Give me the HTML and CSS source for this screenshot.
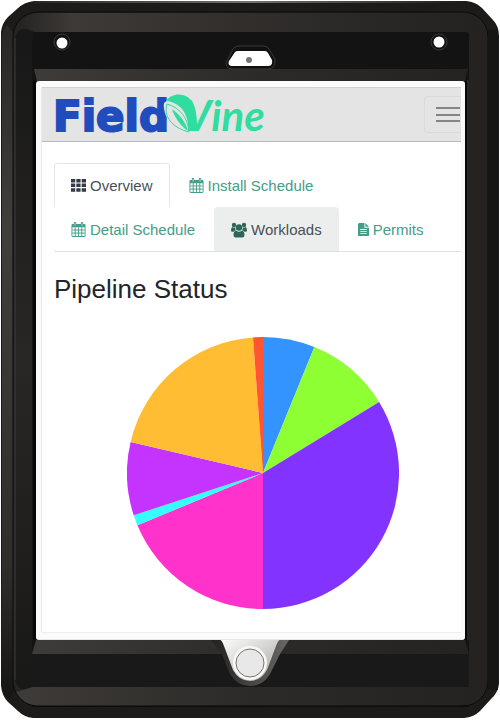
FILE: index.html
```html
<!DOCTYPE html>
<html lang="en">
<head>
<meta charset="utf-8">
<meta name="viewport" content="width=device-width, initial-scale=1">
<title>FieldVine</title>
<link rel="stylesheet" href="styles.css">
</head>
<body>
<div class="device">
  <svg class="case" viewBox="0 0 500 720" preserveAspectRatio="none" aria-hidden="true">
    <defs>
      <linearGradient id="bevelTop" x1="0" x2="1"><stop offset="0" stop-color="#242220"/><stop offset=".12" stop-color="#3d3a38"/><stop offset=".45" stop-color="#322f2d"/><stop offset="1" stop-color="#232221"/></linearGradient>
      <linearGradient id="bevelLow" x1="0" x2="1"><stop offset="0" stop-color="#3e3b38"/><stop offset=".5" stop-color="#2d2b29"/><stop offset="1" stop-color="#242321"/></linearGradient>
      <linearGradient id="sideLeft" x1="0" x2="0" y1="0" y2="1"><stop offset="0" stop-color="#292725"/><stop offset=".3" stop-color="#403f3c"/><stop offset=".8" stop-color="#302e2b"/><stop offset="1" stop-color="#151514"/></linearGradient>
      <linearGradient id="channel" x1="0" x2="0" y1="0" y2="1"><stop offset="0" stop-color="#171717"/><stop offset=".5" stop-color="#292725"/><stop offset="1" stop-color="#181817"/></linearGradient>
      <linearGradient id="edge" gradientUnits="userSpaceOnUse" x1="34" x2="466" y1="0" y2="0"><stop offset="0" stop-color="#282624"/><stop offset=".5" stop-color="#75716c"/><stop offset="1" stop-color="#1a1a1a"/></linearGradient>
      <linearGradient id="home" x1="0" x2="1" y1="0" y2="1"><stop offset="0" stop-color="#fff"/><stop offset="1" stop-color="#a5a4a2"/></linearGradient>
      <linearGradient id="bowl" x1="0" x2="1"><stop offset="0" stop-color="#22201f"/><stop offset="1" stop-color="#6a6764"/></linearGradient>
    </defs>
    <path d="M34 1H466Q476 2 482 8L493 20Q499 26 499 36V684Q498 693 491 699L480 711Q474 717 464 718H33Q24 717 18 711L8 702Q2 696 1 686V32Q2 23 8 17L17 9Q24 2 34 1Z" fill="#1c1b1a"/>
    <path d="M7 25Q2 29 2 40V686Q3 695 10 699L14 690V34Z" fill="url(#sideLeft)"/>
    <path d="M34 1H466V3H34Z" fill="url(#edge)"/>
    <rect x="13" y="12" width="475" height="694" rx="25" fill="#262422" stroke="#0b0b0b"/>
    <path d="M15 38Q18 18 38 13H460Q480 14 486 34L469 33H34Z" fill="url(#bevelTop)"/>
    <path d="M15 38Q18 24 34 32V687Q18 694 15 680Z" fill="url(#channel)"/>
    <path d="M15 38V680" stroke="#3d3b38"/>
    <path d="M469 34H487V680Q486 702 464 705L469 687Z" fill="#252321"/>
    <path d="M493 30V690" stroke="#151514" stroke-width="10"/>
    <path d="M34 32H466Q469 32 469 35V684Q469 687 466 687H32V48Z" fill="#131313"/>
    <path d="M34 69H468L465 81H37Z" fill="url(#bevelLow)"/>
    <path d="M36 640H465L469 654H32Z" fill="url(#bevelLow)"/>
    <path d="M32 654H469V687H32Z" fill="#191919"/>
    <path d="M33 687H468L462 706H38Q22 704 16 692Z" fill="url(#bevelLow)"/>
    <path d="M32 706H468" stroke="#090909"/>
    <path d="M35 81V639" stroke="#050505" stroke-width="3"/>
    <path d="M467 81V640" stroke="#070707" stroke-width="4"/>
    <path d="M468 80V640" stroke="#4a4948"/>
    <g fill="#111" stroke="#3b3938">
      <circle cx="62" cy="42" r="8"/><circle cx="439" cy="42" r="8"/>
      <path d="M226 63L233 49Q235 46 239 46H264Q267 46 269 49L275 59Q276 69 268 69H233Q226 69 226 63Z"/>
    </g>
    <g fill="#fff">
      <circle cx="62" cy="43" r="5.500"/><circle cx="439" cy="42" r="5.500"/>
      <path d="M229 61L235 52Q236 51 238 51H265Q267 51 268 53L272 60Q273 66 268 66H233Q227 66 229 61Z"/>
    </g>
    <circle cx="249" cy="60" r="3" fill="#777"/>
    <path d="M211 640H289L280 654L270 674Q263 686 250 686Q237 686 230 674L222 654Z" fill="url(#bowl)"/>
    <path d="M219 639H281Q278 640 276 646L267 670Q261 681 250 681Q239 681 233 670L224 646Q222 640 219 639Z" fill="url(#home)"/>
    <circle cx="250" cy="663" r="17" fill="#f8f8f8"/>
    <circle cx="250" cy="663" r="14" fill="#e8e8e8" stroke="#77736e"/>
  </svg>

  <div class="screen">
    <div class="page">
      <header class="topbar">
        <a class="brand" href="#" aria-label="FieldVine">
          <svg width="220" height="48" viewBox="0 -4 220 48">
            <text class="brand-field" x="-1" y="36">Field</text>
            <path d="M110 8Q128-8 140 12Q145 24 138 38Q120 33 112 21Q109 13 110 8Z" fill="#e4e4e4"/>
            <text class="brand-vine" x="130" y="36">Vine</text>
            <path d="M112 6C118-3 133-3 139 8C143 16 143 25 143 36H134C135 25 131 14 122 9C118 7 115 6 112 6Z" fill="#30dda0"/>
            <path d="M113 9C109 22 119 33 135 37C134 24 127 13 113 9Z" fill="#e4e4e4" stroke="#30dda0" stroke-width="1"/>
            <path d="M118 14C125 19 132 27 134 36C128 32 121 24 118 14Z" fill="#30dda0"/>
          </svg>
        </a>
        <button class="menu" type="button" aria-label="Menu">
          <svg width="24" height="16" viewBox="0 0 24 16"><path d="M0 1H24M0 8H24M0 14H24" stroke="#858585" stroke-width="2"/></svg>
        </button>
      </header>

      <main class="content">
        <nav class="tabs" aria-label="Sections">
          <a class="tab tab-active" href="#" aria-current="page">
            <svg class="icon" viewBox="0 0 16 16"><path d="M0 1h4.500v3.800H0zM5.700 1h4.500v3.800H5.700zM11.400 1H16v3.800h-4.600zM0 5.900h4.500v3.800H0zM5.700 5.900h4.500v3.800H5.700zM11.400 5.900H16v3.800h-4.600zM0 10.800h4.500v3.800H0zM5.700 10.800h4.500v3.800H5.700zM11.400 10.800H16v3.800h-4.600z"/></svg>
            Overview
          </a>
          <a class="tab" href="#">
            <svg class="icon" viewBox="0 0 16 16"><use href="#calendar"/></svg>
            Install Schedule
          </a>
          <a class="tab" href="#">
            <svg class="icon" viewBox="0 0 16 16"><g id="calendar"><path fill-rule="evenodd" d="M1.500 2H3V1a1 1 0 0 1 1-1h.5a1 1 0 0 1 1 1v1h5V1a1 1 0 0 1 1-1h.5a1 1 0 0 1 1 1v1h1.500L15.500 3v12l-1 1h-13l-1-1V3zM1.500 5.500V15h13V5.500zM4 1v3h.6V1zM11.500 1v3h.6V1z"/><path d="M4.500 5.500V15M8 5.500V15M11.500 5.500V15M1.500 8.500h13M1.500 11.800h13" fill="none" stroke="currentColor" stroke-width="1"/></g></svg>
            Detail Schedule
          </a>
          <a class="tab tab-hover" href="#">
            <svg class="icon icon-people" viewBox="0 0 16 16"><circle cx="3" cy="3" r="2.200"/><circle cx="13" cy="3" r="2.200"/><circle cx="8" cy="5.500" r="3.200"/><path d="M1.300 5Q3 6.300 4.200 5.300Q4 7.500 5 8.500Q3.500 8.600 2.600 9.800H1.200Q0 9.800 0 8.500Q0 5.500 1.300 5ZM14.700 5Q13 6.300 11.800 5.300Q12 7.500 11 8.500Q12.500 8.600 13.400 9.800H14.800Q16 9.800 16 8.500Q16 5.500 14.700 5ZM5.300 8.800Q8 10.800 10.700 8.800Q13.500 9 13.500 13Q13.500 15.500 11.300 15.500H4.700Q2.500 15.500 2.500 13Q2.500 9 5.300 8.800Z"/></svg>
            Workloads
          </a>
          <a class="tab" href="#">
            <svg class="icon icon-file" viewBox="0 0 12 16"><path fill-rule="evenodd" d="M1 1h6v5h5v8.500L11.500 15H.5L0 14.500V2zM8 1l4 4H8zM2.500 7.500v1h7v-1zM2.500 9.800v1h7v-1zM2.500 12v1h7v-1z"/></svg>
            Permits
          </a>
        </nav>

        <h1 class="title">Pipeline Status</h1>
        <svg class="pie" viewBox="-136 -136 272 272" role="img" aria-label="Pipeline status pie chart">
          <path fill="#3393ff" d="M0 0V-136A136 136 0 0 1 51.400-125.900Z"/>
          <path fill="#8dff33" d="M0 0L51.400-125.900A136 136 0 0 1 116.100-70.900Z"/>
          <path fill="#8333ff" d="M0 0L116.100-70.900A136 136 0 0 1 0 136Z"/>
          <path fill="#ff33cb" d="M0 0V136A136 136 0 0 1-125.600 52.300Z"/>
          <path fill="#33fffc" d="M0 0L-125.600 52.300A136 136 0 0 1-129.300 42.300Z"/>
          <path fill="#c433ff" d="M0 0L-129.300 42.300A136 136 0 0 1-132.400-31.100Z"/>
          <path fill="#ffbd33" d="M0 0L-132.400-31.100A136 136 0 0 1-10-135.600Z"/>
          <path fill="#ff5533" d="M0 0L-10-135.600A136 136 0 0 1 0-136Z"/>
        </svg>
      </main>
    </div>
  </div>
</div>
</body>
</html>
```
FILE: styles.css
```css
* {
  box-sizing: border-box;
}

body {
  margin: 0;
  background: #fff;
  color: #212529;
  font-family: "Liberation Sans", Arial, sans-serif;
  font-size: 15px;
}

.device {
  position: relative;
  display: flex;
  min-height: 100vh;
  padding: 81px 35px 80px 36px;
}

.case {
  position: absolute;
  inset: 0;
  width: 100%;
  height: 100%;
}

.screen {
  position: relative;
  flex: 1;
  min-width: 0;
  display: flex;
  padding: 6px 4px 6px 5px;
  border-radius: 3px;
  background: #fbfbfc;
  border-bottom: 1px solid #e4e6ea;
}

.page {
  flex: 1;
  min-width: 0;
  overflow: hidden;
  background: #fff;
  border-left: 1px solid #e8e9ee;
  border-bottom: 1px solid #eceef2;
}

.topbar {
  display: flex;
  align-items: center;
  justify-content: space-between;
  height: 55px;
  padding-left: 12px;
  background: #e4e4e4;
  border-top: 1px solid #d8d0cc;
  border-bottom: 1px solid #b9b9b9;
}

.brand svg {
  display: block;
  overflow: visible;
}

.brand-field {
  fill: #214cbe;
  stroke: #214cbe;
  stroke-width: 2px;
  font: bold 42px "DejaVu Sans", sans-serif;
}

.brand-vine {
  fill: #30dda0;
  font: italic bold 42px Lato, sans-serif;
}

.menu {
  display: flex;
  align-items: center;
  height: 37px;
  padding: 0 1px 0 11px;
  border: 1px solid #dadada;
  border-right: 0;
  border-radius: 4px 0 0 4px;
  background: none;
}

.content {
  margin-right: -10px;
  padding: 21px 0 0 12px;
}

.tabs {
  display: flex;
  flex-wrap: wrap;
  border-bottom: 1px solid #dee2e6;
}

.tab {
  display: flex;
  align-items: center;
  gap: 4px;
  height: 44px;
  margin-right: 2px;
  padding: 0 16px;
  border: 1px solid transparent;
  border-bottom: 0;
  border-radius: 4px 4px 0 0;
  color: #459c88;
  text-decoration: none;
}

.tab-active {
  border-color: #e3e5e7;
  color: #495057;
}

.tab-hover {
  background: #eceeee;
  color: #495057;
}

.icon {
  width: 15px;
  height: 15px;
  fill: currentColor;
}

.icon-people {
  width: 16px;
  height: 16px;
  color: #2c6657;
}

.icon-file {
  width: 11px;
}

.tab-active .icon {
  color: #343a46;
}

.title {
  margin: 21px 0 0;
  font-size: 26px;
  font-weight: 400;
  line-height: 32px;
}

.pie {
  display: block;
  width: 272px;
  max-width: 100%;
  margin: 32px auto 20px;
}
```
